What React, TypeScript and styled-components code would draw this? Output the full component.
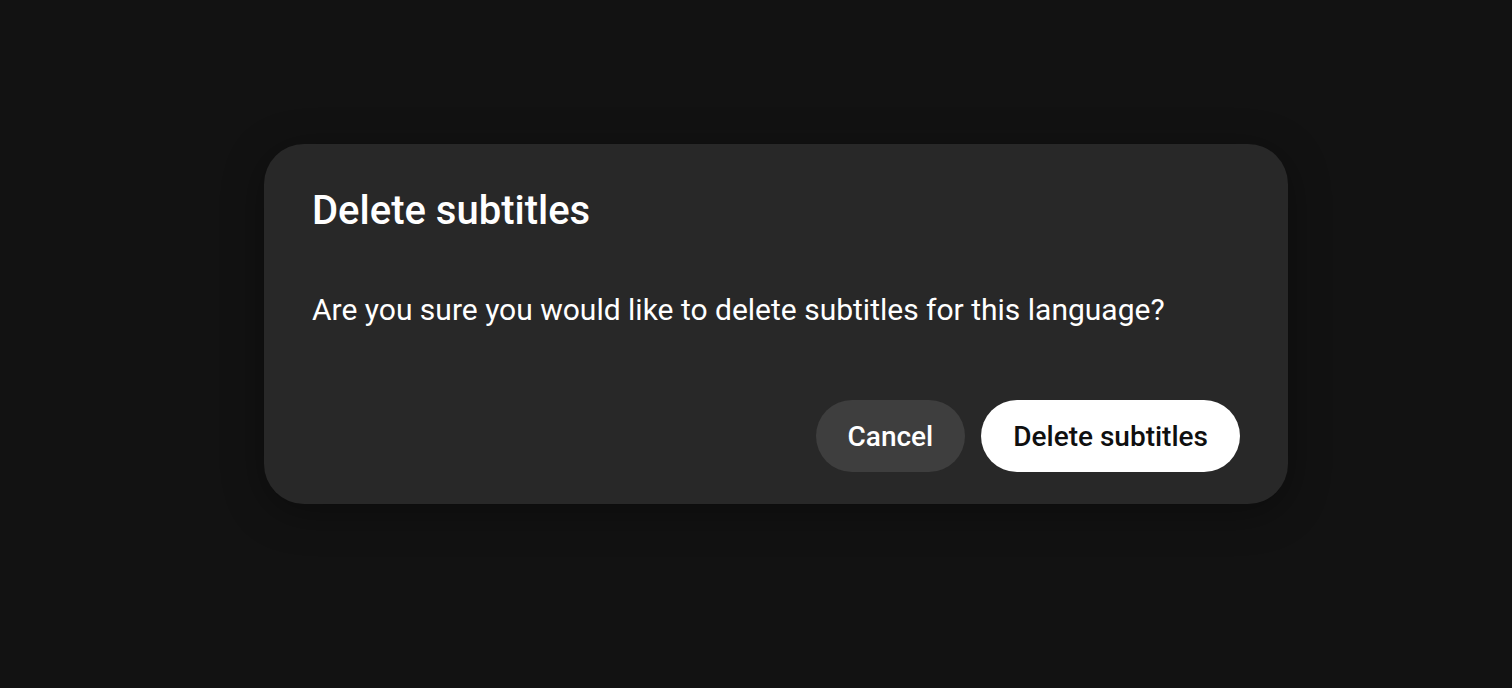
import styled, { createGlobalStyle } from "styled-components";

const GlobalStyle = createGlobalStyle`
  html, body {
    margin: 0;
    padding: 0;
    background: #121212;
    font-family: Roboto, "Noto Sans", Arial, sans-serif;
  }
`;

const Page = styled.div`
  min-height: 688px;
  box-sizing: border-box;
  padding: 144px 0 0 264px;
`;

const Dialog = styled.div`
  width: 1024px;
  height: 360px;
  box-sizing: border-box;
  background: #282828;
  border-radius: 40px;
  padding: 43px 48px 32px 48px;
  display: flex;
  flex-direction: column;
  box-shadow: 0 8px 40px rgba(0, 0, 0, 0.35);
`;

const Title = styled.h2`
  margin: 0;
  color: #ffffff;
  font-size: 40px;
  line-height: 48px;
  font-weight: 500;
`;

const Message = styled.p`
  margin: 55px 0 0;
  color: #ffffff;
  font-size: 30px;
  line-height: 40px;
  font-weight: 400;
`;

const Actions = styled.div`
  margin-top: auto;
  display: flex;
  justify-content: flex-end;
  gap: 16px;
`;

const Button = styled.button<{ $primary?: boolean }>`
  height: 72px;
  padding: 0 32px;
  border: none;
  border-radius: 36px;
  font-family: inherit;
  font-size: 28px;
  font-weight: 500;
  background: ${(p) => (p.$primary ? "#ffffff" : "#3e3e3e")};
  color: ${(p) => (p.$primary ? "#0f0f0f" : "#ffffff")};
  cursor: pointer;
`;

export default function App() {
  return (
    <>
      <GlobalStyle />
      <Page>
        <Dialog role="dialog">
          <Title>Delete subtitles</Title>
          <Message>
            Are you sure you would like to delete subtitles for this language?
          </Message>
          <Actions>
            <Button>Cancel</Button>
            <Button $primary>Delete subtitles</Button>
          </Actions>
        </Dialog>
      </Page>
    </>
  );
}
